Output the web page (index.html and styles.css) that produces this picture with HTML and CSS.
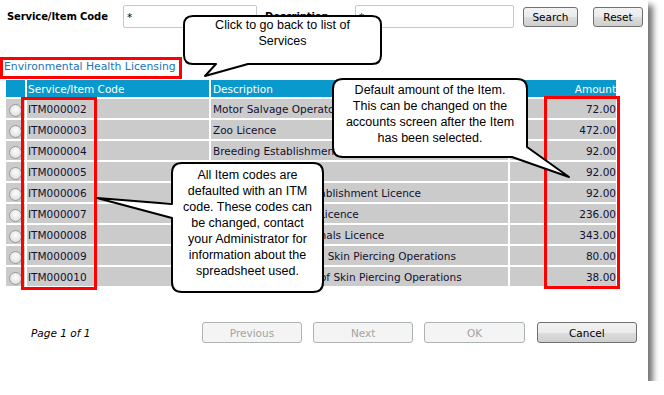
FILE: index.html
```html
<!DOCTYPE html>
<html lang="en">
<head>
    <meta charset="UTF-8">
    <title>Select Service Item</title>
    <link rel="stylesheet" href="styles.css">
</head>
<body>
<div class="dialog">
    <div class="filters">
        <label class="lbl-code">Service/Item Code</label>
        <input type="text" class="input-code" value="*">
        <label class="lbl-desc">Description</label>
        <input type="text" class="input-desc" value="*">
        <button class="btn btn-search">Search</button>
        <button class="btn btn-reset">Reset</button>
    </div>

    <a class="service-link" href="#">Environmental Health Licensing</a>

    <table class="items">
        <tr class="head">
            <th class="col-radio"></th>
            <th class="col-code">Service/Item Code</th>
            <th class="col-desc">Description</th>
            <th class="col-amount">Amount</th>
        </tr>
        <tr><td class="col-radio"><span class="radio"></span></td><td class="col-code">ITM000002</td><td class="col-desc">Motor Salvage Operators</td><td class="col-amount">72.00</td></tr>
        <tr><td class="col-radio"><span class="radio"></span></td><td class="col-code">ITM000003</td><td class="col-desc">Zoo Licence</td><td class="col-amount">472.00</td></tr>
        <tr><td class="col-radio"><span class="radio"></span></td><td class="col-code">ITM000004</td><td class="col-desc">Breeding Establishment Licence</td><td class="col-amount">92.00</td></tr>
        <tr><td class="col-radio"><span class="radio"></span></td><td class="col-code">ITM000005</td><td class="col-desc">Pet Shop Licence</td><td class="col-amount">92.00</td></tr>
        <tr><td class="col-radio"><span class="radio"></span></td><td class="col-code">ITM000006</td><td class="col-desc">Animal Boarding Establishment Licence</td><td class="col-amount">92.00</td></tr>
        <tr><td class="col-radio"><span class="radio"></span></td><td class="col-code">ITM000007</td><td class="col-desc">Performing Animals Licence</td><td class="col-amount">236.00</td></tr>
        <tr><td class="col-radio"><span class="radio"></span></td><td class="col-code">ITM000008</td><td class="col-desc">Dangerous Wild Animals Licence</td><td class="col-amount">343.00</td></tr>
        <tr><td class="col-radio"><span class="radio"></span></td><td class="col-code">ITM000009</td><td class="col-desc">Personal Registration Skin Piercing Operations</td><td class="col-amount">80.00</td></tr>
        <tr><td class="col-radio"><span class="radio"></span></td><td class="col-code">ITM000010</td><td class="col-desc">Parlour Registration of Skin Piercing Operations</td><td class="col-amount">38.00</td></tr>
    </table>

    <div class="footer">
        <span class="pager">Page 1 of 1</span>
        <button class="btn btn-wide" disabled>Previous</button>
        <button class="btn btn-wide" disabled>Next</button>
        <button class="btn btn-wide" disabled>OK</button>
        <button class="btn btn-wide btn-cancel">Cancel</button>
    </div>

    <!-- annotations drawn over the dialog -->
    <div class="mark mark-link"></div>
    <div class="mark mark-codes"></div>
    <div class="mark mark-amounts"></div>

    <div class="callout callout-back">
        <svg class="bubble" width="206" height="68" viewBox="0 0 206 68">
            <path d="M13,4 H192 Q201,4 201,13 V43 Q201,52 192,52 H68 L25,64 L36,52 H13 Q4,52 4,43 V13 Q4,4 13,4 Z"/>
        </svg>
        <div class="callout-text">Click to go back to list of<br>Services</div>
    </div>

    <div class="callout callout-amount">
        <svg class="bubble" width="246" height="108" viewBox="0 0 246 108">
            <path d="M14,4 H188 Q198,4 198,14 V72 L240,102 L183,82 H14 Q4,82 4,72 V14 Q4,4 14,4 Z"/>
        </svg>
        <div class="callout-text">Default amount of the Item.<br>This can be changed on the<br>accounts screen after the Item<br>has been selected.</div>
    </div>

    <div class="callout callout-codes">
        <svg class="bubble bubble-left" width="234" height="137" viewBox="0 0 234 137">
            <path d="M89,4 H220 Q230,4 230,14 V123 Q230,133 220,133 H89 Q79,133 79,123 V59 L4,39 L79,45 V14 Q79,4 89,4 Z"/>
        </svg>
        <div class="callout-text">All Item codes are<br>defaulted with an ITM<br>code. These codes can<br>be changed, contact<br>your Administrator for<br>information about the<br>spreadsheet used.</div>
    </div>
</div>
</body>
</html>
```
FILE: styles.css
```css
body { margin: 0; background: #fff; font-family: "DejaVu Sans", sans-serif; color: #000; }
.dialog { position: relative; width: 648px; height: 381px; background: #fff; box-shadow: 5px 5px 6px rgba(0, 0, 0, 0.55); }

.filters { display: flex; align-items: center; height: 23px; padding: 5px 0 0 6px; }
.filters label { font-weight: bold; font-size: 10px; letter-spacing: -0.1px; white-space: nowrap; }
.lbl-code { width: 117px; padding-left: 1px; box-sizing: border-box; }
.lbl-desc { width: 90px; margin-left: 8px; }
.filters input { box-sizing: border-box; height: 23px; border: 1px solid #c8c8c8; border-radius: 2px;
                 padding: 0 3px; font-family: "DejaVu Sans", sans-serif; font-size: 10.5px; }
.input-code { width: 134px; }
.input-desc { width: 159px; }

.btn { box-sizing: border-box; height: 20px; padding: 0; border: 1px solid #707070; border-radius: 3px;
       background: linear-gradient(#f2f2f2 0%, #ebebeb 50%, #dddddd 51%, #cfcfcf 100%);
       font-family: "DejaVu Sans", sans-serif; font-size: 10.5px; color: #000; }
.btn-search { width: 55px; margin-left: 9px; }
.btn-reset { width: 50px; margin-left: 15px; }
.btn:disabled { background: #f4f4f4; border-color: #adb2b5; color: #a3a3a3; }

.service-link { display: block; margin-top: 29px; height: 20px; line-height: 20px; padding-left: 4px;
                font-size: 10.8px; color: #1874b9; text-decoration: none; }

.items { margin: 1px 0 0 4px; width: 614px; table-layout: fixed; border-collapse: separate; border-spacing: 2px;
         font-size: 10.5px; color: #111133; }
.items th, .items td { box-sizing: border-box; padding: 0; white-space: nowrap; overflow: hidden; }
.items th { height: 17px; background: #0a99cc; color: #fff; font-weight: normal; text-align: left; }
.items td { height: 19px; background: #cbcbcb; }
.items .col-radio { width: 19px; text-align: center; }
.items .col-code { width: 182px; padding-left: 1px; }
.items .col-desc { width: 297px; padding-left: 2px; }
.items .col-amount { width: 106px; text-align: right; }
.radio { display: inline-block; width: 11px; height: 11px; margin-top: 3px; border: 1px solid #9a9a9a; border-radius: 50%;
         background: radial-gradient(circle at 50% 40%, #fdfdfd 0%, #e6e6e6 60%, #cfcfcf 100%); vertical-align: top; }

.footer { display: flex; align-items: center; height: 21px; margin-top: 34px; }
.pager { width: 172px; padding-left: 31px; font-size: 10.5px; font-style: italic; }
.btn-wide { width: 101px; height: 21px; margin-right: 11px; }
.btn-cancel { margin-left: 1px; }

.mark { position: absolute; border: 3px solid #ff0000; box-sizing: border-box; }
.mark-link { left: 0; top: 57px; width: 182px; height: 22px; }
.mark-codes { left: 21px; top: 97px; width: 76px; height: 193px; }
.mark-amounts { left: 544px; top: 96px; width: 76px; height: 193px; }

.callout { position: absolute; }
.bubble { position: absolute; left: -4px; top: -4px; overflow: visible; }
.bubble-left { left: -79px; }
.bubble path { fill: #fff; stroke: #000; stroke-width: 2; stroke-linejoin: round; }
.callout-text { position: relative; text-align: center; font-family: "Liberation Sans", Arial, sans-serif;
                font-size: 12.5px; line-height: 16px; color: #000; }
.callout-back { left: 184px; top: 16px; width: 197px; height: 48px; }
.callout-back .callout-text { padding-top: 1px; }
.callout-amount { left: 333px; top: 79px; width: 194px; height: 78px; }
.callout-amount .callout-text { padding-top: 3px; }
.callout-codes { left: 172px; top: 163px; width: 151px; height: 129px; }
.callout-codes .callout-text { padding-top: 4px; }
```
